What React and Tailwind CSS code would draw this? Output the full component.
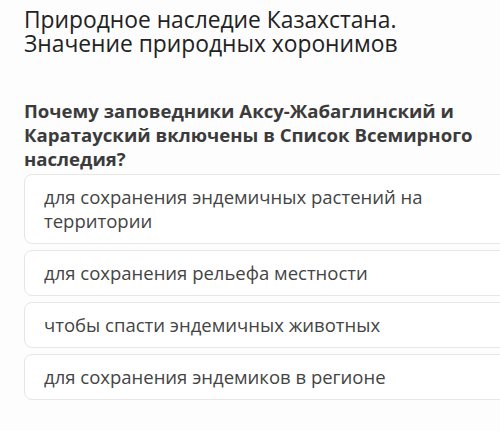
export default function App() {
    const options = [
        'для сохранения эндемичных растений на территории',
        'для сохранения рельефа местности',
        'чтобы спасти эндемичных животных',
        'для сохранения эндемиков в регионе'
    ];

    return (
        <div className="w-[500px] h-[431px] overflow-hidden bg-[#fdfdfd] font-['Open_Sans',sans-serif]">
            <div className="pl-6 pt-[8px]">
                <h1 className="text-[22.8px] leading-6 text-[#222] font-normal">
                    <span className="block">Природное наследие Казахстана.</span>
                    <span className="block">Значение природных хоронимов</span>
                </h1>

                <h2 className="mt-[43px] pr-4 text-[18.6px] leading-6 font-bold text-[#3b3b3b]">
                    Почему заповедники Аксу-Жабаглинский и Каратауский включены в Список Всемирного наследия?
                </h2>

                {/* Answers */}
                <div className="mt-[3px] -mr-4 flex flex-col gap-[6px]">
                    {options.map(opt => (
                        <div
                            key={opt}
                            className="pl-[19px] pr-14 py-[10px] bg-white border border-[#e6e6e6] rounded-lg text-[18.5px] leading-6 text-[#444]"
                        >
                            {opt}
                        </div>
                    ))}
                </div>
            </div>
        </div>
    );
}
